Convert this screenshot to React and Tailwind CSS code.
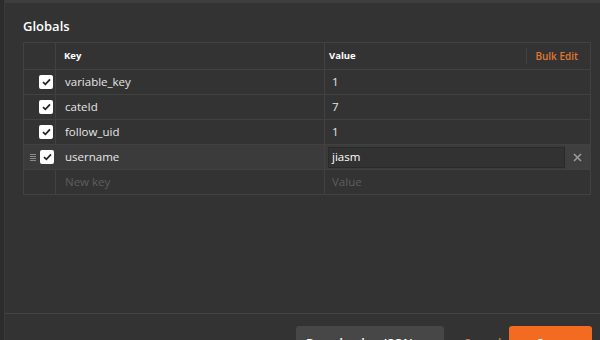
import React from "react";

const rows = [
  { key: "variable_key", value: "1" },
  { key: "cateId", value: "7" },
  { key: "follow_uid", value: "1" },
];

const Check = () => (
  <span className="flex items-center justify-center w-[14px] h-[14px] rounded-[2px] bg-white">
    <svg width="9" height="8" viewBox="0 0 9 8" fill="none">
      <path d="M1 4.2 L3.4 6.4 L8 1.4" stroke="#222" strokeWidth="1.7" />
    </svg>
  </span>
);

const App = () => {
  return (
    <div
      className="w-[600px] h-[340px] overflow-hidden flex bg-[#333333] text-[#e6e6e6]"
      style={{ fontFamily: '"Open Sans", "Noto Sans", sans-serif' }}
    >
      {/* left edge */}
      <div className="w-[5px] bg-[#2c2c2c] border-r border-[#3a3a3a]" />

      <div className="flex-1 flex flex-col border-t-[3px] border-[#3e3e3e]">
        <div className="px-[18px] pt-[13px] text-[13px] font-semibold text-white leading-[20px]">
          Globals
        </div>

        {/* table */}
        <div className="ml-[18px] mr-[9px] mt-[6px] border border-[#414141] text-[11.5px]">
          {/* header */}
          <div className="flex h-[27px] border-b border-[#414141]">
            <div className="w-[32px] border-r border-[#414141]" />
            <div className="w-[269px] border-r border-[#414141] flex items-center pl-[8px] text-[9.5px] font-bold text-white">
              Key
            </div>
            <div className="flex-1 flex items-center pl-[4px] text-[9.5px] font-bold text-white">
              <span className="flex-1">Value</span>
              <span className="h-[16px] border-l border-[#414141] mr-[8px]" />
              <span className="text-[10px] font-semibold text-[#e0792f] pr-[12px]">Bulk Edit</span>
            </div>
          </div>

          {rows.map((r) => (
            <div key={r.key} className="flex h-[25px] border-b border-[#414141]">
              <div className="w-[32px] border-r border-[#414141] flex items-center justify-end pr-[2px]">
                <Check />
              </div>
              <div className="w-[269px] border-r border-[#414141] flex items-center pl-[9px]">
                {r.key}
              </div>
              <div className="flex-1 flex items-center pl-[7px]">{r.value}</div>
            </div>
          ))}

          {/* active row */}
          <div className="flex h-[25px] border-b border-[#414141] bg-[#3b3b3b]">
            <div className="w-[32px] flex items-center justify-end pr-[2px] gap-[4px]">
              <span className="flex flex-col gap-[1px]">
                <span className="block w-[6px] h-[1px] bg-[#8a8a8a]" />
                <span className="block w-[6px] h-[1px] bg-[#8a8a8a]" />
                <span className="block w-[6px] h-[1px] bg-[#8a8a8a]" />
                <span className="block w-[6px] h-[1px] bg-[#8a8a8a]" />
              </span>
              <Check />
            </div>
            <div className="w-[269px] border-r border-[#414141] flex items-center pl-[9px]">
              username
            </div>
            <div className="flex-1 flex items-center pl-[3px]">
              <div className="w-[237px] h-[21px] bg-[#323232] border border-[#2a2a2a] flex items-center pl-[3px] text-white">
                jiasm
              </div>
              <div className="flex-1 h-full flex items-center justify-center bg-[#3f3f3f]">
                <svg width="9" height="9" viewBox="0 0 9 9">
                  <path d="M1 1 L8 8 M8 1 L1 8" stroke="#9a9a9a" strokeWidth="1.6" />
                </svg>
              </div>
            </div>
          </div>

          {/* new row */}
          <div className="flex h-[24px]">
            <div className="w-[32px] border-r border-[#414141]" />
            <div className="w-[269px] border-r border-[#414141] flex items-center pl-[9px] text-[#5e5e5e]">
              New key
            </div>
            <div className="flex-1 flex items-center pl-[7px] text-[#5e5e5e]">Value</div>
          </div>
        </div>

        <div className="flex-1" />

        {/* footer */}
        <div className="border-t border-[#454545] h-[27px] flex items-start pt-[12px]">
          <div className="ml-[291px] w-[148px] h-[30px] rounded-[3px] bg-[#474747] text-[12px] font-semibold text-white pl-[10px] pt-[9px] whitespace-nowrap">
            Download as JSON
          </div>
          <div className="w-[65px] pl-[19px] text-[12px] font-semibold text-[#c0754a] pt-[9px]">Cancel</div>
          <div className="w-[83px] h-[30px] rounded-[3px] bg-[#f26b21] text-[12px] font-semibold text-white text-center pt-[9px]">
            Save
          </div>
        </div>
      </div>
    </div>
  );
};

export default App;
